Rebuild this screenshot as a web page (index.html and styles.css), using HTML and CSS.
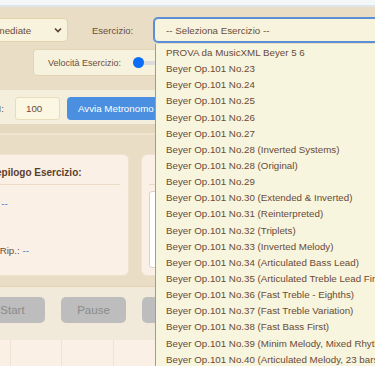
FILE: index.html
```html
<!DOCTYPE html>
<html lang="it">
<head>
  <meta charset="UTF-8" />
  <meta name="viewport" content="width=device-width, initial-scale=1" />
  <title>Esercizi Pianoforte</title>
  <link rel="stylesheet" href="styles.css">
</head>
<body>
  <div class="top-strip"></div>

  <div class="page">
    <div class="settings">
      <div class="settings-row">
        <div class="fake-select level-select">
          <span>Intermediate</span>
          <svg class="chevron" width="8" height="6" viewBox="0 0 8 6"><path d="M1 1.5 L4 4.5 L7 1.5" fill="none" stroke="#5a4030" stroke-width="1.6"/></svg>
        </div>
        <label class="row-label">Esercizio:</label>
        <div class="fake-select exercise-select">-- Seleziona Esercizio --</div>
      </div>
      <div class="settings-row">
        <div class="speed-box">
          <span>Velocità Esercizio:</span>
          <div class="slider"><div class="slider-thumb"></div></div>
        </div>
      </div>
    </div>

    <div class="metro-bar">
      <span class="metro-label">BPM:</span>
      <div class="bpm-input">100</div>
      <button class="btn-blue">Avvia Metronomo</button>
    </div>
    <div class="metro-edge"></div>

    <div class="panels">
      <div class="panel summary">
        <h3>Riepilogo Esercizio:</h3>
        <div class="summary-row">ID: <span class="value">--</span></div>
        <div class="summary-row last">N° Rip.: <span class="value">--</span></div>
      </div>
      <div class="panel score">
        <h3>Spartito:</h3>
        <div class="score-box"></div>
      </div>
    </div>

    <div class="button-bar">
      <button class="btn-gray">Start</button>
      <button class="btn-gray">Pause</button>
      <button class="btn-gray">Stop</button>
    </div>

    <div class="keys">
      <div class="key"></div>
      <div class="key"></div>
      <div class="key"></div>
      <div class="key"></div>
      <div class="key"></div>
      <div class="key"></div>
      <div class="key"></div>
      <div class="key"></div>
    </div>
  </div>

  <ul class="dropdown">
    <li>PROVA da MusicXML Beyer 5 6</li>
    <li>Beyer Op.101 No.23</li>
    <li>Beyer Op.101 No.24</li>
    <li>Beyer Op.101 No.25</li>
    <li>Beyer Op.101 No.26</li>
    <li>Beyer Op.101 No.27</li>
    <li>Beyer Op.101 No.28 (Inverted Systems)</li>
    <li>Beyer Op.101 No.28 (Original)</li>
    <li>Beyer Op.101 No.29</li>
    <li>Beyer Op.101 No.30 (Extended &amp; Inverted)</li>
    <li>Beyer Op.101 No.31 (Reinterpreted)</li>
    <li>Beyer Op.101 No.32 (Triplets)</li>
    <li>Beyer Op.101 No.33 (Inverted Melody)</li>
    <li>Beyer Op.101 No.34 (Articulated Bass Lead)</li>
    <li>Beyer Op.101 No.35 (Articulated Treble Lead First)</li>
    <li>Beyer Op.101 No.36 (Fast Treble - Eighths)</li>
    <li>Beyer Op.101 No.37 (Fast Treble Variation)</li>
    <li>Beyer Op.101 No.38 (Fast Bass First)</li>
    <li>Beyer Op.101 No.39 (Minim Melody, Mixed Rhythm)</li>
    <li>Beyer Op.101 No.40 (Articulated Melody, 23 bars)</li>
  </ul>
</body>
</html>
```
FILE: styles.css
```css
* { box-sizing: border-box; }
body {
  margin: 0;
  height: 366px;
  overflow: hidden;
  position: relative;
  font-family: "Liberation Sans", Arial, sans-serif;
  font-size: 9.75px;
  color: #6b4e3a;
  background: #e9ddc5;
}
.top-strip {
  height: 7px;
  background: #f4f7f8;
  border-bottom: 2px solid #dfe6ea;
}
.page {
  margin-left: -40px;
  width: 460px;
}

/* impostazioni */
.settings {
  padding: 11px 0 14px;
}
.settings-row {
  display: flex;
  align-items: center;
}
.settings-row + .settings-row {
  margin-top: 7px;
}
.fake-select {
  height: 24px;
  display: flex;
  align-items: center;
  background: #f7f3dc;
  border: 1px solid #e0d2ad;
  border-radius: 4px;
  padding: 0 10px;
}
.level-select {
  width: 108px;
  justify-content: space-between;
  padding: 0 5px 0 16px;
}
.row-label {
  margin-left: 24px;
  width: 62px;
  font-size: 9.5px;
}
.exercise-select {
  width: 260px;
  padding-left: 11px;
  border-color: #5a8fd6;
  box-shadow: 0 0 0 1px #5a8fd6;
}
.speed-box {
  margin-left: 73px;
  width: 300px;
  height: 27px;
  display: flex;
  align-items: center;
  padding-left: 14px;
  background: #f6f2dd;
  border: 1px solid #e2d5b5;
  border-radius: 4px;
  font-size: 9px;
}
.slider {
  margin-left: 12px;
  width: 120px;
  height: 4px;
  border-radius: 2px;
  background: #dcdcdc;
  display: flex;
  align-items: center;
}
.slider-thumb {
  width: 11px;
  height: 11px;
  border-radius: 50%;
  background: #0b6cf5;
}

/* metronomo */
.metro-bar {
  height: 34px;
  display: flex;
  align-items: flex-start;
  padding-top: 7px;
  background: #f4efdc;
}
.metro-label {
  margin-left: 20px;
  width: 35px;
  line-height: 23px;
}
.bpm-input {
  width: 45px;
  height: 23px;
  line-height: 21px;
  padding-left: 10px;
  background: #fcf7e2;
  border: 1px solid #e8ddbb;
  border-radius: 3px;
}
.btn-blue {
  margin-left: 7px;
  height: 23px;
  padding: 0 11px;
  border: none;
  border-radius: 4px;
  background: #4a8fe0;
  color: #fff;
  font: inherit;
}
.metro-edge {
  height: 11px;
  background: #e4d8bf;
  border-bottom: 2px solid #efe5cf;
}

/* pannelli */
.panels {
  display: flex;
  gap: 12px;
  padding: 19px 0 10px 14px;
}
.panel {
  height: 122px;
  background: #faf0e6;
  border: 1px solid #efe2d0;
  border-radius: 6px;
  padding: 0 8px 0 11px;
}
.summary {
  width: 155px;
}
.score {
  width: 200px;
  padding-left: 7px;
}
.panel h3 {
  margin: 0;
  padding: 11px 0 4px;
  font-size: 10px;
  line-height: 14px;
  color: #5a3e2b;
  border-bottom: 1px solid #ecdcc6;
}
.score h3 {
  padding-left: 14px;
}
.summary-row {
  margin-top: 12px;
  line-height: 14px;
}
.summary-row.last {
  margin-top: 33px;
}
.value {
  color: #2f7de1;
}
.score-box {
  margin-top: 6px;
  height: 77px;
  background: #fff;
  border: 1px solid #d9d2c8;
  border-radius: 3px;
}

/* pulsanti */
.button-bar {
  display: flex;
  gap: 16px;
  padding: 10px 0 0 20px;
  height: 54px;
  background: #f1eada;
  border-top: 1px solid #e0d2b4;
}
.btn-gray {
  width: 65px;
  height: 26px;
  border: none;
  border-radius: 5px;
  background: #bdbdbd;
  color: #8a8a8a;
  font: inherit;
  font-size: 11.5px;
}

/* tastiera */
.keys {
  display: flex;
  height: 40px;
  padding-left: 50px;
  background: #faf0e6;
}
.key {
  width: 52px;
  border-left: 1px solid #f0e1d0;
}

/* menu a tendina aperto */
.dropdown {
  position: absolute;
  left: 155px;
  top: 44px;
  width: 240px;
  height: 330px;
  margin: 0;
  padding: 1px 0 0;
  list-style: none;
  background: #f7f5dd;
  border-left: 1px solid #9c9c9c;
  overflow: hidden;
}
.dropdown li {
  padding-left: 10px;
  height: 16.15px;
  line-height: 16px;
  white-space: nowrap;
  color: #6a4a37;
}
```
